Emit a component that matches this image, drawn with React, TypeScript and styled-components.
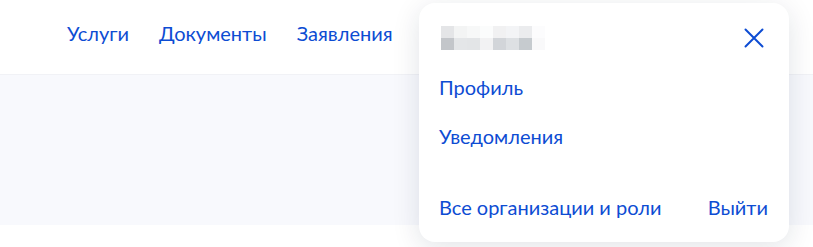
import React from 'react';
import styled, { createGlobalStyle } from 'styled-components';

const GlobalStyle = createGlobalStyle`
    body {
        margin: 0;
        font-family: Lato, 'Noto Sans', sans-serif;
        background: #fff;
    }
`;

const Page = styled.div`
    position: relative;
    width: 813px;
    height: 247px;
    overflow: hidden;
    background: #fff;
`;

const Header = styled.header`
    height: 75px;
    box-sizing: border-box;
    display: flex;
    align-items: flex-start;
    gap: 30px;
    padding: 21px 0 0 67px;
    background: #fff;
    border-bottom: 1px solid #f1f2f6;
    box-shadow: 0 1px 3px rgba(0, 0, 0, 0.02);
`;

const NavLink = styled.a`
    font-size: 20px;
    line-height: 24px;
    color: #0d4cd3;
    text-decoration: none;
`;

const Hero = styled.div`
    height: 150px;
    background: #f8f9fd;
`;

const Dropdown = styled.div`
    position: absolute;
    top: 3px;
    left: 419px;
    width: 370px;
    height: 239px;
    box-sizing: border-box;
    display: flex;
    flex-direction: column;
    padding: 23px 21px 23px 20px;
    background: #fff;
    border-radius: 16px;
    box-shadow: 0 6px 28px rgba(20, 30, 60, 0.12);
`;

const UserRow = styled.div`
    height: 24px;
    display: flex;
    align-items: center;
    justify-content: space-between;
`;

const Blurred = styled.div`
    display: grid;
    grid-template-columns: repeat(8, 13px);
    grid-auto-rows: 12px;
    margin-left: 2px;
`;

const Pixel = styled.span<{ $c: string }>`
    background: ${(p) => p.$c};
`;

const CloseButton = styled.button`
    width: 24px;
    height: 24px;
    padding: 0;
    margin-right: 2px;
    border: none;
    background: none;
    display: flex;
    align-items: center;
    justify-content: center;
    cursor: pointer;
`;

const Menu = styled.div`
    display: flex;
    flex-direction: column;
    gap: 25px;
    margin-top: 25px;
`;

const MenuLink = styled.a`
    font-size: 20px;
    line-height: 24px;
    color: #0d4cd3;
    text-decoration: none;
`;

const Footer = styled.div`
    margin-top: auto;
    display: flex;
    justify-content: space-between;
`;

const pixels = [
    '#e4e5e7', '#f3f4f4', '#f7f8f8', '#fbfcfc', '#f1f1f2', '#f3f4f6', '#ebecee', '#fcfcfd',
    '#c3c6ca', '#e4e6e8', '#e3e5e7', '#f2f2f3', '#d2d5d9', '#dde0e3', '#c6cbcf', '#f9f9fa',
];

const navItems = ['Услуги', 'Документы', 'Заявления'];

const App: React.FC = () => {
    return (
        <>
            <GlobalStyle />
            <Page>
                <Header>
                    {navItems.map((item) => (
                        <NavLink key={item} href="#">{item}</NavLink>
                    ))}
                </Header>
                <Hero />
                <Dropdown>
                    <UserRow>
                        <Blurred>
                            {pixels.map((c, i) => (
                                <Pixel key={i} $c={c} />
                            ))}
                        </Blurred>
                        <CloseButton aria-label="Закрыть">
                            <svg width="24" height="24" viewBox="0 0 24 24" fill="none">
                                <path d="M3.5 3.5L20.5 20.5M20.5 3.5L3.5 20.5" stroke="#0d4cd3" strokeWidth="2" strokeLinecap="round" />
                            </svg>
                        </CloseButton>
                    </UserRow>
                    <Menu>
                        <MenuLink href="#">Профиль</MenuLink>
                        <MenuLink href="#">Уведомления</MenuLink>
                    </Menu>
                    <Footer>
                        <MenuLink href="#">Все организации и роли</MenuLink>
                        <MenuLink href="#">Выйти</MenuLink>
                    </Footer>
                </Dropdown>
            </Page>
        </>
    );
};

export default App;
